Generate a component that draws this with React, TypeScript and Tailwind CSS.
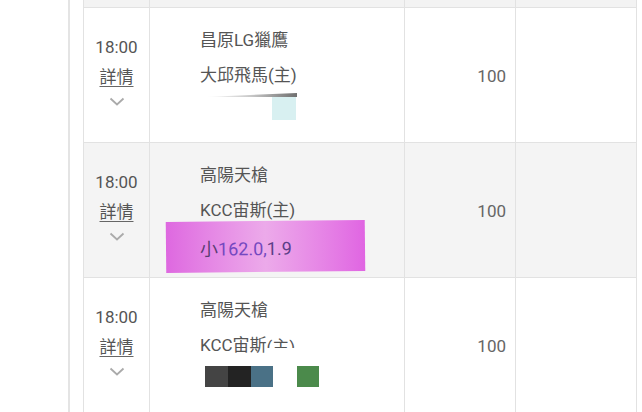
const font = { fontFamily: 'Roboto, "Noto Sans CJK TC", sans-serif' };

function Chevron() {
  return (
    <svg width="16" height="9" viewBox="0 0 16 9" className="mt-[4px]">
      <path d="M1.5 1.5 L8 7.5 L14.5 1.5" fill="none" stroke="#aaa" strokeWidth="1.8" />
    </svg>
  );
}

function TimeCell() {
  return (
    <div className="flex flex-col items-center pt-[25px] text-[17px] text-[#555]">
      <div className="h-[28px] leading-[28px]">18:00</div>
      <div className="h-[32px] leading-[32px] underline underline-offset-[3px] decoration-[#666]">詳情</div>
      <Chevron />
    </div>
  );
}

function Row({ bg, home, away, extra }: { bg: string; home: string; away: React.ReactNode; extra: React.ReactNode }) {
  return (
    <div className={`grid grid-cols-[66px_255px_111px_121px] h-[135px] border-b border-[#e2e2e2] ${bg}`}>
      <div className="border-r border-[#e2e2e2]">
        <TimeCell />
      </div>
      <div className="border-r border-[#e2e2e2] pl-[50px] pt-[15px] text-[17px] text-[#555]">
        <div className="h-[35px] flex items-center">{home}</div>
        <div className="h-[35px] flex items-center">{away}</div>
        {extra}
      </div>
      <div className="border-r border-[#e2e2e2] flex items-center justify-end pr-[9px] pt-[4px] text-[17px] text-[#666]">100</div>
      <div className="border-r border-[#e2e2e2]" />
    </div>
  );
}

export default function App() {
  return (
    <div className="w-[642px] h-[412px] overflow-hidden bg-white flex" style={font}>
      <div className="w-[70px] border-r-2 border-[#e4e4e4] shrink-0" />
      <div className="pl-[13px] shrink-0">
        <div className="w-[554px] border-l border-[#e2e2e2]">
          <div className="h-[8px] bg-[#f3f3f3] border-b border-[#e2e2e2] grid grid-cols-[66px_255px_111px_121px]">
            <div className="border-r border-[#e2e2e2]" />
            <div className="border-r border-[#e2e2e2]" />
            <div className="border-r border-[#e2e2e2]" />
            <div className="border-r border-[#e2e2e2]" />
          </div>
          <Row
            bg="bg-white"
            home="昌原LG獵鷹"
            away="大邱飛馬(主)"
            extra={
              <div className="h-[30px]">
                <div className="ml-[5px] h-[4px] w-[92px] bg-gradient-to-r from-white via-[#c8c8c8] to-[#707070] [clip-path:polygon(0_100%,100%_0,100%_100%)]" />
                <div className="ml-[72px] h-[23px] w-[24px] bg-[#d8f0f1]" />
              </div>
            }
          />
          <Row
            bg="bg-[#f4f4f4]"
            home="高陽天槍"
            away="KCC宙斯(主)"
            extra={
              <div className="-ml-[34px] -mt-[7px] h-[51px] w-[199px] pl-[34px] pt-[4px] flex items-center text-[18px] bg-gradient-to-r from-[#de68e0] via-[#ecaaea] to-[#e065e2] -rotate-[0.6deg]">
                <span className="text-[#5a3d72]">小</span>
                <span className="text-[#7448c0]">162.0,</span>
                <span className="text-[#5c3f88]">1.9</span>
              </div>
            }
          />
          <Row
            bg="bg-white"
            home="高陽天槍"
            away={
              <>
                KCC宙斯<span className="inline-block h-[13px] overflow-hidden self-start mt-[7px]">(主)</span>
              </>
            }
            extra={
              <div className="flex ml-[5px] mt-[3px] h-[21px]">
                <div className="w-[23px] bg-[#444]" />
                <div className="w-[23px] bg-[#232323]" />
                <div className="w-[22px] bg-[#4a7186]" />
                <div className="w-[24px]" />
                <div className="w-[22px] bg-[#4b8a4b]" />
              </div>
            }
          />
        </div>
      </div>
    </div>
  );
}
